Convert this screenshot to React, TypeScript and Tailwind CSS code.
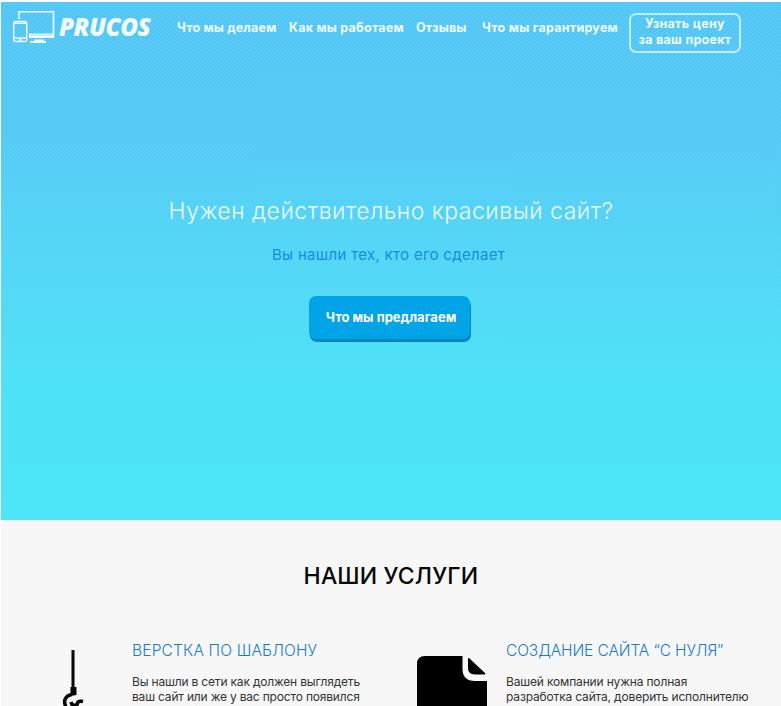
import React from "react";

const nav = [
  { label: "Что мы делаем", box: "ml-[26px] w-[112px] tracking-[0.18px]" },
  { label: "Как мы работаем", box: "w-[127px] tracking-[0.24px]" },
  { label: "Отзывы", box: "w-[66px] tracking-[0.15px]" },
  { label: "Что мы гарантируем", box: "w-[147px] tracking-[0.25px]" },
];

function Logo() {
  return (
    <svg className="ml-[11px] mt-[7px] h-[36px] w-[44px] shrink-0" viewBox="0 0 44 36" fill="none">
      <path d="M7 10V2.8H41.500V27.500H31" stroke="#eefaff" strokeWidth="1.600" />
      <rect x="1.700" y="12.600" width="13" height="20" rx="1.500" stroke="#eefaff" strokeWidth="1.500" />
      <path d="M2 14.200h12M2 29h12" stroke="#eefaff" strokeWidth="1.400" />
      <path d="M7 31h3" stroke="#eefaff" strokeWidth="1.500" />
      <path d="M17 24.500h25v4.500H17z" fill="#eefaff" />
      <path d="M19 26h21" stroke="#56c9f5" strokeWidth="0.500" />
      <path d="M22 30.500h10v1.500h2V34H18v-2h4z" fill="#eefaff" />
    </svg>
  );
}

function Hook() {
  return (
    <svg className="ml-[58px] mt-[20px] h-[58px] w-[30px] shrink-0" viewBox="0 0 30 58">
      <path d="M12.500 0h3v37h2v8l-6 1v-9h1z" fill="#050505" />
      <path d="M13 44.500c-7 1-9 7-6 12M12 52c1 4.500 6 4.500 7 0c1-1 3-1 5-.5" fill="none" stroke="#050505" strokeWidth="3.500" />
    </svg>
  );
}

function FileIcon() {
  return (
    <svg className="ml-[28px] mt-[26px] h-[50px] w-[70px] shrink-0" viewBox="0 0 70 50">
      <path d="M8 0H45.500V13Q45.500 25 58 25H70V50H0V8Q0 0 8 0Z" />
      <path d="M51 3Q51 1.500 52.500 2.500L68 17Q69 18.500 67 18.500H58Q51 18.500 51 12Z" />
    </svg>
  );
}

export default function App() {
  return (
    <div className="h-[706px] w-[781px] overflow-hidden bg-white pl-px pt-[2px] font-['Inter','Noto_Sans',sans-serif]">
      <section className="h-[518px] bg-[linear-gradient(180deg,rgba(82,199,246,0)_0%,rgba(84,202,245,0.3)_27%,rgba(81,217,246,0.7)_57%,#4de4f8_80%,#4de5f8_100%),repeating-linear-gradient(135deg,rgba(255,255,255,0.09)_0px,rgba(255,255,255,0.09)_1.414px,transparent_1.414px,transparent_2.828px),linear-gradient(180deg,#4dc5f5_0%,#52c9f5_27%,#51d9f6_57%,#4de4f8_80%,#4de5f8_100%)]">
        <header className="flex h-[56px]">
          <Logo />
          <div className="ml-[3px] mt-[8px] w-[92px] whitespace-nowrap font-['Open_Sans',sans-serif] text-[25px] font-extrabold italic leading-[32px] tracking-[-0.5px] text-[#f4fcff]">
            <span className="inline-block origin-left scale-x-[0.97]">PRUCOS</span>
          </div>
          <nav className="flex">
            {nav.map((item) => (
              <a key={item.label} className={"shrink-0 whitespace-nowrap pt-[16px] text-[12.500px] font-bold leading-5 text-[#effbff] " + item.box}>
                {item.label}
              </a>
            ))}
          </nav>
          <button className="mt-[11px] h-[40px] w-[112px] shrink-0 whitespace-nowrap rounded-[7px] border-2 border-[#bcefff] pb-[2px] text-center text-[12.500px] font-bold leading-[16px] tracking-[0.3px] text-[#effbff]">
            Узнать цену<br />за ваш проект
          </button>
        </header>
        <div className="flex flex-col items-center">
          <h1 className="mt-[136px] whitespace-nowrap text-[23px] font-light leading-[34px] tracking-[0.5px] text-[#e8faff]">Нужен действительно красивый сайт?</h1>
          <p className="mr-[5px] mt-[15px] whitespace-nowrap text-[15px] leading-[24px] tracking-[0.31px] text-[#168ddb]">Вы нашли тех, кто его сделает</p>
          <button className="mr-[4px] mt-[29px] h-[43px] w-[161px] whitespace-nowrap rounded-[7px] bg-[#00a4e7] pl-[4px] text-[13px] font-bold text-white shadow-[1px_3px_0_#0785bd]">Что мы предлагаем</button>
        </div>
      </section>
      <section className="h-[186px] bg-[#f7f7f7]">
        <h2 className="pt-[39px] text-center text-[23px] font-medium leading-[34px] tracking-[0.15px] text-[#080808]">НАШИ УСЛУГИ</h2>
        <div className="mt-[37px] flex">
          <article className="flex w-[388px] shrink-0">
            <Hook />
            <div className="ml-[43px] whitespace-nowrap">
              <h3 className="mt-[10px] text-[15.500px] font-light leading-[22px] tracking-[0.18px] text-[#167cd2]">ВЕРСТКА ПО ШАБЛОНУ</h3>
              <p className="mt-[13px] text-[12px] leading-[14.500px] tracking-[-0.18px] text-[#333]">Вы нашли в сети как должен выглядеть<br />ваш сайт или же у вас просто появился<br />в голове образ? Мы сделаем</p>
            </div>
          </article>
          <article className="flex shrink-0">
            <FileIcon />
            <div className="ml-[19px] whitespace-nowrap">
              <h3 className="mt-[10px] text-[15.500px] font-light leading-[22px] tracking-[-0.1px] text-[#167cd2]">СОЗДАНИЕ САЙТА “С НУЛЯ”</h3>
              <p className="mt-[13px] text-[12px] leading-[14.500px] tracking-[-0.16px] text-[#333]">Вашей компании нужна полная<br />разработка сайта, доверить исполнителю<br />и забыть про все заботы?</p>
            </div>
          </article>
        </div>
      </section>
    </div>
  );
}
